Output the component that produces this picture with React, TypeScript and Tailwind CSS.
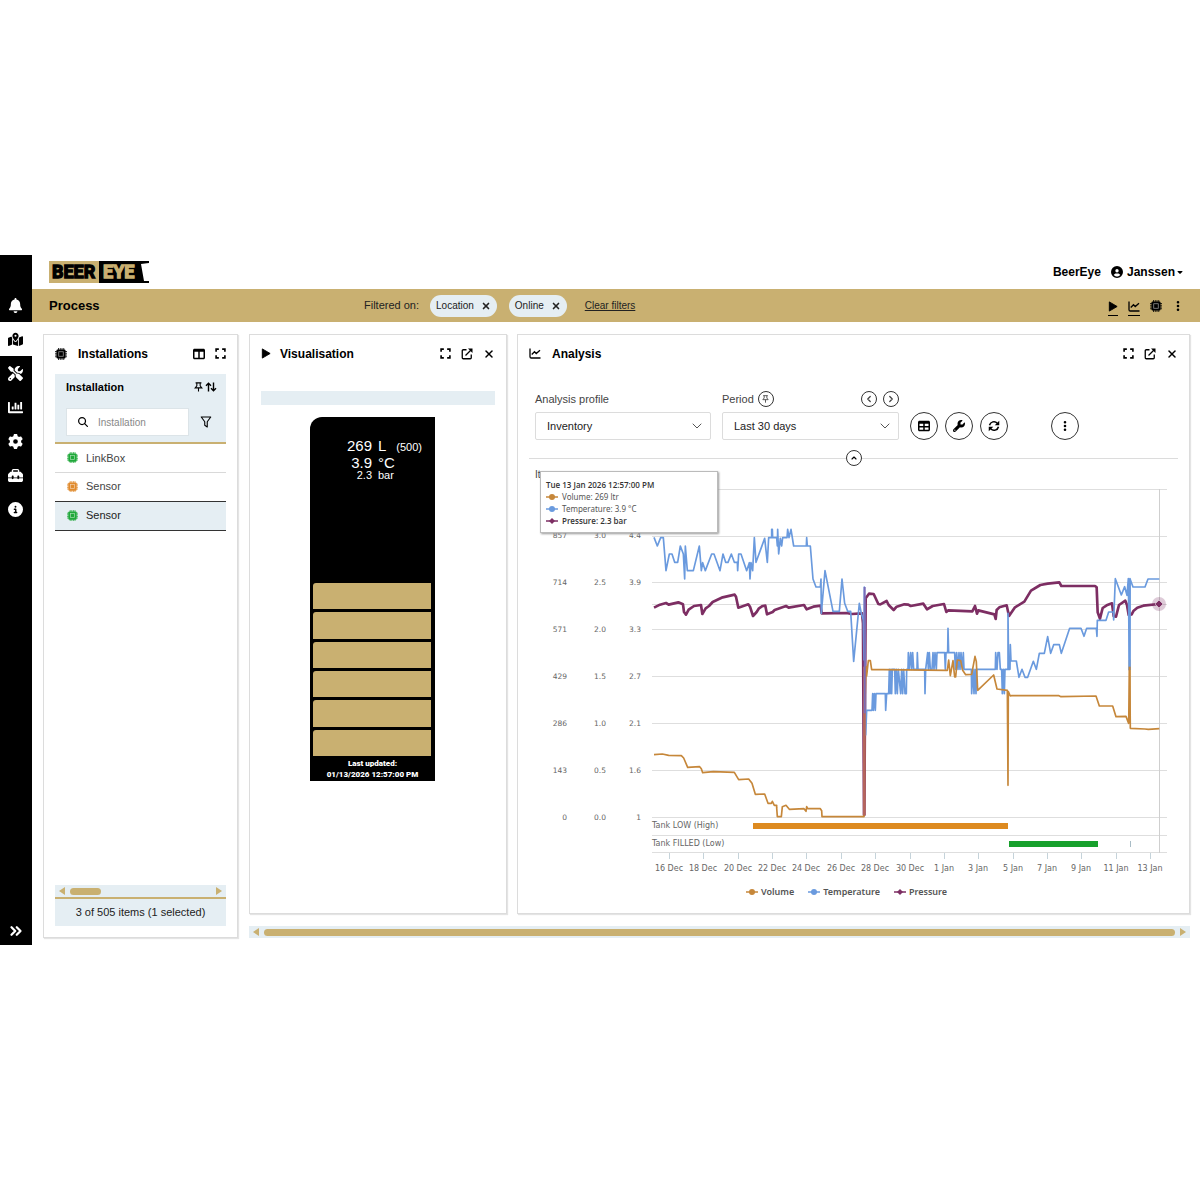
import React from "react";
import {
  FaBell,
  FaMapLocationDot,
  FaScrewdriverWrench,
  FaGear,
  FaToolbox,
  FaCircleInfo,
  FaTableColumns,
  FaCircleUser,
  FaCaretDown,
  FaTable,
  FaWrench,
  FaEllipsisVertical,
  FaMagnifyingGlass,
} from "react-icons/fa6";
import { FaChartBar } from "react-icons/fa";
import { ChevronDown, ChevronLeft, ChevronRight, ChevronUp, ChevronsRight, X } from "lucide-react";

type IconProps = { className?: string };

function LineChartIcon({ className }: IconProps) {
  return (
    <svg viewBox="0 0 24 22" className={className} fill="none" stroke="currentColor" strokeWidth="2.6" aria-hidden="true">
      <path d="M2 1v16.500q0 2.500 2.500 2.500H23" />
      <path d="M5.500 13l5.500-5.500 3.500 3.500 7.500-6.500" />
    </svg>
  );
}

function ChipIcon({ className }: IconProps) {
  return (
    <svg viewBox="0 0 24 24" className={className} fill="none" stroke="currentColor" aria-hidden="true">
      <path
        d="M7 0v24M10.500 0v24M14 0v24M17.500 0v24M0 7h24M0 10.500h24M0 14h24M0 17.500h24"
        strokeWidth="1.600"
      />
      <rect x="3" y="3" width="18" height="18" rx="2" fill="currentColor" stroke="none" />
      <rect x="7.500" y="7.500" width="9" height="9" stroke="#fff" strokeOpacity="0.600" strokeWidth="1.500" />
    </svg>
  );
}

function PinIcon({ className }: IconProps) {
  return (
    <svg viewBox="0 0 20 24" className={className} fill="none" stroke="currentColor" strokeWidth="2.600" aria-hidden="true">
      <path d="M3 2h14M6 2v7L2 14h16l-4-5V2M10 14v9" />
    </svg>
  );
}

function PlayIcon({ className }: IconProps) {
  return (
    <svg viewBox="0 0 10 12" className={className} fill="currentColor" stroke="currentColor" strokeWidth="1" strokeLinejoin="round" aria-hidden="true">
      <path d="M1 1l8.500 5L1 11z" />
    </svg>
  );
}

function FullscreenIcon({ className }: IconProps) {
  return (
    <svg viewBox="0 0 20 20" className={className} fill="none" stroke="currentColor" strokeWidth="3" aria-hidden="true">
      <path d="M2 7V2h5M13 2h5v5M18 13v5h-5M7 18H2v-5" />
    </svg>
  );
}

function PopOutIcon({ className }: IconProps) {
  return (
    <svg viewBox="0 0 24 24" className={className} fill="none" stroke="currentColor" strokeWidth="2.6" aria-hidden="true">
      <path d="M11 3.500H4.500a2 2 0 0 0-2 2V19.500a2 2 0 0 0 2 2H18.500a2 2 0 0 0 2-2V13" />
      <path d="M9 15L21 3" />
      <path d="M14 1h9v9z" fill="currentColor" stroke="none" />
    </svg>
  );
}

function SortIcon({ className }: IconProps) {
  return (
    <svg viewBox="0 0 24 20" className={className} fill="none" stroke="currentColor" strokeWidth="2.8" aria-hidden="true">
      <path d="M7 19V3M2 7.500L7 2.500l5 5" />
      <path d="M17 1v16M12 12.500l5 5 5-5" />
    </svg>
  );
}

function FunnelIcon({ className }: IconProps) {
  return (
    <svg viewBox="0 0 22 24" className={className} fill="none" stroke="currentColor" strokeWidth="2.200" strokeLinejoin="round" aria-hidden="true">
      <path d="M1.500 2h19l-7 9.500V22l-5-3.500v-7z" />
    </svg>
  );
}

function RefreshIcon({ className }: IconProps) {
  return (
    <svg viewBox="0 0 24 24" className={className} fill="none" stroke="currentColor" strokeWidth="3" aria-hidden="true">
      <path d="M3 10.500a9 9 0 0 1 15.500-4" />
      <path d="M22.500 1.500v9h-9z" fill="currentColor" stroke="none" />
      <path d="M21 13.500a9 9 0 0 1-15.500 4" />
      <path d="M1.500 22.500v-9h9z" fill="currentColor" stroke="none" />
    </svg>
  );
}

function Logo() {
  return (
    <a href="#home" aria-label="BeerEye" className="block">
      <svg viewBox="0 0 100 22" className="block h-[22px] w-[100px]" aria-hidden="true">
        <rect width="50" height="22" fill="#c9b071" />
        <path d="M50 0h50v2l-8 1 3 17h5v2H50z" fill="#000" />
        <g fontFamily="Roboto, sans-serif" fontWeight="700" fontSize="18" strokeWidth="1.300">
          <text x="3" y="17" fill="#000" stroke="#000">BEER</text>
          <text x="54" y="17" fill="#c9b071" stroke="#c9b071">EYE</text>
        </g>
      </svg>
    </a>
  );
}

const NAV = [
  { label: "Notifications", icon: FaBell, active: false },
  { label: "Process", icon: FaMapLocationDot, active: true },
  { label: "Maintenance", icon: FaScrewdriverWrench, active: false },
  { label: "Reports", icon: FaChartBar, active: false },
  { label: "Settings", icon: FaGear, active: false },
  { label: "Toolbox", icon: FaToolbox, active: false },
  { label: "Information", icon: FaCircleInfo, active: false },
];

function Sidebar() {
  return (
    <nav className="flex w-8 shrink-0 flex-col bg-black pt-[33px] text-white">
      {NAV.map(({ label, icon: Icon, active }) => (
        <button
          key={label}
          aria-label={label}
          className={
            active
              ? "flex h-[34px] items-center justify-center bg-white pr-0.5 text-black"
              : "flex h-[34px] items-center justify-center pr-0.5"
          }
        >
          <Icon className="size-[15px]" />
        </button>
      ))}
      <button aria-label="Expand menu" className="mt-auto flex h-7 items-center justify-center">
        <ChevronsRight className="size-[18px]" strokeWidth={3} />
      </button>
    </nav>
  );
}

function Chip({ label }: { label: string }) {
  return (
    <span className="flex h-[22px] items-center gap-[7px] rounded-full bg-[#e5eef3] px-1.5 text-[10px]">
      {label}
      <button aria-label={`Remove ${label}`}>
        <X className="size-2.5" strokeWidth={4} />
      </button>
    </span>
  );
}

function PanelHeader({
  title,
  icon,
  children,
}: {
  title: string;
  icon: React.ReactNode;
  children: React.ReactNode;
}) {
  return (
    <header className="mb-0.5 flex h-[37px] shrink-0 items-center">
      {icon}
      <h2 className="text-[12px] font-bold">{title}</h2>
      <div className="ml-auto flex items-center gap-2.5">{children}</div>
    </header>
  );
}

const PANEL = "flex flex-col border border-[#dcdcdc] bg-white px-[11px] shadow-[1px_1px_1px_#e4e4e4]";

function WindowButtons() {
  return (
    <>
      <button aria-label="Full screen">
        <FullscreenIcon className="size-[11px]" />
      </button>
      <button aria-label="Open in new window">
        <PopOutIcon className="size-3" />
      </button>
      <button aria-label="Close">
        <X className="size-3" strokeWidth={3} />
      </button>
    </>
  );
}

function ScrollArrow({ direction }: { direction: "left" | "right" }) {
  return (
    <button aria-label={`Scroll ${direction}`} className="text-[#c9b071]">
      <svg viewBox="0 0 6 8" className="block h-2 w-1.5" fill="currentColor" aria-hidden="true">
        <path d={direction === "left" ? "M6 0v8L0 4z" : "M0 0v8l6-4z"} />
      </svg>
    </button>
  );
}

const ITEMS = [
  { name: "LinkBox", tone: "text-[#1fa83a]", row: "h-[29px] border-b border-[#d9d9d9] text-[#444]" },
  { name: "Sensor", tone: "text-[#e08a2c]", row: "h-[29px] border-b border-[#333] text-[#444]" },
  { name: "Sensor", tone: "text-[#1fa83a]", row: "h-[29px] border-b border-[#333] bg-[#e5eef3] text-[#222]" },
];

function Installations() {
  return (
    <section className={`${PANEL} w-[195px] shrink-0 pb-[11px]`}>
      <PanelHeader title="Installations" icon={<ChipIcon className="mr-[11px] size-3" />}>
        <button aria-label="Columns">
          <FaTableColumns className="size-3" />
        </button>
        <button aria-label="Full screen">
          <FullscreenIcon className="size-[11px]" />
        </button>
      </PanelHeader>
      <table className="w-full border-collapse text-left text-[11px]">
        <thead>
          <tr className="border-b-2 border-[#c9b071] bg-[#e5eef3]">
            <th className="h-[69px] p-0 px-[11px] align-top">
              <div className="flex h-[26px] items-center">
                Installation
                <button aria-label="Pin column" className="mr-0.5 ml-auto">
                  <PinIcon className="h-2.5 w-[9px]" />
                </button>
                <button aria-label="Sort column" className="-mr-0.5">
                  <SortIcon className="h-2.5 w-3" />
                </button>
              </div>
              <div className="mt-2 flex items-center justify-between font-normal">
                <label className="flex h-7 w-[123px] items-center gap-2.5 border border-[#dce4e8] bg-white pl-[11px]">
                  <FaMagnifyingGlass className="size-2.5 shrink-0" />
                  <input
                    aria-label="Installation"
                    placeholder="Installation"
                    className="w-20 min-w-0 text-[10px] outline-none placeholder:text-[#888]"
                  />
                </label>
                <button aria-label="Filter" className="mr-[3px]">
                  <FunnelIcon className="h-3 w-3" />
                </button>
              </div>
            </th>
          </tr>
        </thead>
        <tbody>
          {ITEMS.map((item, i) => (
            <tr key={i} className={item.row}>
              <td className="px-3 py-0">
                <span className="flex items-center gap-2">
                  <ChipIcon className={`size-[11px] ${item.tone}`} />
                  {item.name}
                </span>
              </td>
            </tr>
          ))}
        </tbody>
      </table>
      <div className="mt-auto flex h-3 items-center gap-[5px] bg-[#e5eef3] px-1">
        <ScrollArrow direction="left" />
        <div className="h-[7px] flex-1">
          <div className="h-full w-[31px] rounded-full bg-[#c9b071]" />
        </div>
        <ScrollArrow direction="right" />
      </div>
      <footer className="flex h-[29px] items-center justify-center border-t-2 border-[#c9b071] bg-[#e5eef3] text-[11px] text-[#222]">
        3 of 505 items (1 selected)
      </footer>
    </section>
  );
}

function Visualisation() {
  return (
    <section className={`${PANEL} w-[258px] shrink-0`}>
      <PanelHeader title="Visualisation" icon={<PlayIcon className="mr-[9px] h-[11px] w-2.5" />}>
        <WindowButtons />
      </PanelHeader>
      <div className="mt-[17px] h-3.5 bg-[#e5eef3]" />
      <div className="mt-3 ml-[49px] flex w-[125px] flex-col rounded-tl-xl bg-black px-[3px] pt-[21px] text-white">
        <div className="grid grid-cols-[59px_1fr] gap-x-1.5">
          <span className="text-right text-[15px] leading-4">269</span>
          <span className="flex items-baseline gap-2.5 text-[15px] leading-4">
            L <span className="text-[11px] leading-4">(500)</span>
          </span>
          <span className="text-right text-[15px] leading-[15px]">3.9</span>
          <span className="text-[15px] leading-[15px]">°C</span>
          <span className="text-right text-[11px] leading-[11px]">2.3</span>
          <span className="text-[11px] leading-[11px]">bar</span>
        </div>
        <div className="mt-[102px] grid h-[173px] grid-rows-6 gap-[3px] pr-px">
          {[0, 1, 2, 3, 4, 5].map((level) => (
            <div key={level} className="rounded-tl-[3px] bg-[#c9b071]" />
          ))}
        </div>
        <p className="pt-0.5 pb-px text-center font-['Roboto'] text-[8px] leading-[11px] font-black">
          Last updated:
          <br />
          01/13/2026 12:57:00 PM
        </p>
      </div>
    </section>
  );
}

const LABEL_FONT = "'DejaVu Sans', sans-serif";

const GRID_ROWS = [
  { y: 536, volume: "857", pressure: "3.0", temperature: "4.4" },
  { y: 583, volume: "714", pressure: "2.5", temperature: "3.9" },
  { y: 630, volume: "571", pressure: "2.0", temperature: "3.3" },
  { y: 677, volume: "429", pressure: "1.5", temperature: "2.7" },
  { y: 724, volume: "286", pressure: "1.0", temperature: "2.1" },
  { y: 771, volume: "143", pressure: "0.5", temperature: "1.6" },
  { y: 818, volume: "0", pressure: "0.0", temperature: "1" },
];

const DATES = [
  "16 Dec", "18 Dec", "20 Dec", "22 Dec", "24 Dec", "26 Dec", "28 Dec", "30 Dec",
  "1 Jan", "3 Jan", "5 Jan", "7 Jan", "9 Jan", "11 Jan", "13 Jan",
];

// Series points are in thirds of a chart unit, measured from the plot origin (640, 480).
const PRESSURE =
  "42,383 60,374 78,369 86,374 115,367 129,373 132,396 138,404 146,389 162,378 183,375 187,402 197,385 207,378 218,366 248,352 284,344 288,350 295,383 325,373 330,380 339,408 350,396 357,385 368,378 376,377 381,403 398,396 404,390 438,378 446,383 492,375 500,388 520,380 542,377 545,400 620,399 635,402 666,400 669,430 672,1005 673,1005 677,355 687,341 701,342 715,372 721,373 740,363 746,375 761,390 770,380 793,373 805,374 812,378 850,371 861,388 878,378 912,372 919,396 925,391 997,394 1005,378 1011,401 1015,391 1063,403 1067,417 1070,390 1078,382 1100,376 1107,408 1125,382 1153,365 1173,332 1201,315 1223,311 1258,307 1264,318 1365,318 1370,322 1373,397 1380,416 1388,384 1400,376 1416,370 1421,408 1428,410 1437,375 1456,362 1461,375 1466,405 1475,403 1481,392 1492,383 1510,377 1557,372";

const TEMPERATURE =
  "42,172 52,198 62,173 70,173 78,272 88,222 96,222 104,247 113,247 121,198 130,222 134,297 136,198 142,272 160,272 178,198 184,272 188,248 196,272 215,222 222,222 240,272 249,222 257,247 264,247 274,222 283,247 292,247 293,272 296,222 303,222 320,272 328,248 330,297 333,248 338,272 343,173 348,247 374,175 382,247 386,173 395,173 395,148 397,148 398,173 410,173 412,198 413,148 416,222 421,175 425,198 428,173 441,173 443,148 447,173 453,148 461,198 499,198 500,173 502,198 511,198 519,297 528,321 541,321 543,297 544,400 555,272 579,394 598,394 606,297 614,370 623,394 632,394 641,544 658,370 664,400 670,420 672,540 673,321 677,765 680,691 696,691 698,641 700,691 703,641 706,691 708,641 736,641 737,691 740,641 746,641 748,568 750,641 753,568 755,641 757,568 764,568 766,641 769,568 772,641 775,568 782,641 785,568 788,641 791,568 795,641 799,641 800,568 804,568 805,518 808,568 812,518 815,568 818,518 821,568 831,568 832,518 834,568 854,568 855,641 857,568 863,518 865,568 868,518 871,568 876,568 879,518 882,568 885,518 889,568 891,518 914,518 916,568 918,518 923,518 924,445 926,518 944,518 946,568 950,518 954,568 957,518 960,568 963,518 967,568 970,518 972,568 994,568 995,641 999,568 1002,641 1005,568 1008,641 1010,568 1066,568 1067,518 1071,568 1074,518 1078,518 1081,568 1085,568 1087,641 1090,568 1093,641 1095,568 1104,568 1104,400 1106,568 1110,568 1111,494 1113,543 1129,543 1137,592 1146,568 1155,592 1163,592 1180,544 1189,568 1198,520 1213,520 1223,470 1232,520 1241,494 1258,494 1264,520 1289,445 1323,445 1332,469 1340,445 1369,445 1371,469 1372,421 1398,421 1406,396 1420,396 1421,420 1426,296 1444,345 1454,320 1461,346 1465,296 1468,570 1470,296 1479,321 1515,321 1524,297 1558,297";

const VOLUME =
  "42,824 67,822 86,826 124,827 131,834 143,862 179,860 184,866 188,878 220,875 283,877 296,899 326,897 336,910 346,943 374,942 384,970 394,970 397,964 403,976 410,976 410,983 412,1010 424,1010 427,980 438,976 448,988 492,986 498,994 500,980 503,986 541,986 545,992 546,1010 672,1010 674,700 678,560 680,588 685,542 691,542 695,569 730,569 922,571 926,540 931,587 939,542 944,591 947,591 952,540 962,542 968,571 977,584 995,583 1005,529 1009,545 1013,631 1061,585 1071,627 1102,631 1104,916 1105,635 1111,648 1115,647 1257,647 1263,650 1368,648 1378,678 1418,678 1428,710 1458,709 1466,730 1469,540 1471,745 1515,747 1525,748 1558,746";

const SERIES = [
  { name: "Volume", color: "#c6873a" },
  { name: "Temperature", color: "#6a9ade" },
  { name: "Pressure", color: "#7d2e63" },
];

function Marker({ color, diamond }: { color: string; diamond: boolean }) {
  return (
    <svg viewBox="0 0 12 8" className="block h-2 w-3 shrink-0" aria-hidden="true">
      <path d="M0 4h12" stroke={color} strokeWidth="1.500" />
      {diamond ? <path d="M6 1l3 3-3 3-3-3z" fill={color} /> : <circle cx="6" cy="4" r="3" fill={color} />}
    </svg>
  );
}

function Chart() {
  return (
    <svg viewBox="529 484 649 396" className="block w-full" role="img" aria-label="Volume, temperature and pressure over the last 30 days">
      <g stroke="#dedede" strokeWidth="1">
        {[490, 537, 583, 605, 630, 677, 724, 771, 818, 836, 853].map((y) => (
          <path key={y} d={`M652 ${y - 0.5}H1167`} />
        ))}
        <path d="M1159.500 489V853" stroke="#cfcfcf" strokeWidth="1" />
        {DATES.map((d, i) => (
          <path key={d} d={`M${Math.round(669 + i * 34.36) + 0.5} 853v6`} stroke="#c5d3da" />
        ))}
      </g>
      <g fontFamily={LABEL_FONT} fontSize="8" fill="#666">
        {GRID_ROWS.map((r) => (
          <g key={r.y} textAnchor="end" fontSize="7.500">
            <text x="567" y={r.y + 2}>{r.volume}</text>
            <text x="606" y={r.y + 2}>{r.pressure}</text>
            <text x="641" y={r.y + 2}>{r.temperature}</text>
          </g>
        ))}
        {DATES.map((d, i) => (
          <text key={d} x={Math.round(669 + i * 34.36)} y="871" textAnchor="middle">{d}</text>
        ))}
        <text x="652" y="828">Tank LOW (High)</text>
        <text x="652" y="846">Tank FILLED (Low)</text>
      </g>
      <rect x="753" y="823" width="255" height="6" fill="#dd8a20" />
      <rect x="1009" y="841" width="89" height="6" fill="#17a02c" />
      <rect x="1130" y="841" width="1" height="6" fill="#a9bcc6" />
      <g transform="translate(640 480) scale(0.33333)" fill="none" strokeLinejoin="round">
        <polyline points={PRESSURE} stroke="#7d2e63" strokeWidth="8" />
        <polyline points={TEMPERATURE} stroke="#6a9ade" strokeWidth="5" />
        <polyline points={VOLUME} stroke="#c6873a" strokeWidth="5" />
        <path d="M673 560V1005" stroke="#b5655c" strokeWidth="8" />
        <path d="M674 321V700" stroke="#7a6cb8" strokeWidth="6" />
        <path d="M1469 296V570" stroke="#6a9ade" strokeWidth="7" />
        <path d="M1469 560V725" stroke="#c6873a" strokeWidth="6" />
      </g>
      <circle cx="1159" cy="604" r="7" fill="#7d2e63" fillOpacity="0.250" />
      <path d="M1159 600l4 4-4 4-4-4z" fill="#7d2e63" stroke="#fff" strokeWidth="0.500" />
    </svg>
  );
}

function Tooltip() {
  const rows = ["Volume: 269 ltr", "Temperature: 3.9 °C", "Pressure: 2.3 bar"];
  return (
    <div className="absolute top-[5px] left-[11px] h-[62px] w-[178px] border border-[#bbb] bg-white px-[5px] pt-[7px] font-['Noto_Sans'] text-[8px] leading-3 text-[#333] shadow-[1px_1px_2px_#999]">
      <p className="font-['Open_Sans'] font-semibold">Tue 13 Jan 2026 12:57:00 PM</p>
      {rows.map((row, i) => (
        <p
          key={row}
          className={
            i === 2
              ? "flex items-center gap-1 font-['Open_Sans'] font-semibold"
              : "flex items-center gap-1 text-[#555]"
          }
        >
          <Marker color={SERIES[i].color} diamond={i === 2} />
          {row}
        </p>
      ))}
    </div>
  );
}

const SMALL_CIRCLE = "flex size-4 items-center justify-center rounded-full border border-[#333] bg-white";
const CIRCLE = "flex size-7 items-center justify-center rounded-full border border-[#333] bg-white";

function SelectBox({ id, value }: { id: string; value: string }) {
  return (
    <div className="relative mt-[5px]">
      <select id={id} defaultValue={value} className="h-7 w-full appearance-none rounded-xs border border-[#dcdcdc] bg-white px-[11px] text-[11px] text-[#222]">
        <option>{value}</option>
      </select>
      <ChevronDown className="pointer-events-none absolute top-1.5 right-1.5 size-4 text-[#333]" strokeWidth={1.25} />
    </div>
  );
}

function Analysis() {
  return (
    <section className={`${PANEL} min-w-0 flex-1 pb-2.5`}>
      <PanelHeader title="Analysis" icon={<LineChartIcon className="mr-[11px] h-[11px] w-3" />}>
        <WindowButtons />
      </PanelHeader>
      <div className="flex items-end px-1.5 pt-[17px]">
        <div className="w-44">
          <label htmlFor="profile" className="flex h-4 items-center text-[11px] text-[#444]">Analysis profile</label>
          <SelectBox id="profile" value="Inventory" />
        </div>
        <div className="ml-[11px] w-[177px]">
          <div className="flex h-4 items-center text-[11px] text-[#444]">
            <label htmlFor="period">Period</label>
            <button aria-label="Pin period" className={`${SMALL_CIRCLE} ml-1`}>
              <PinIcon className="h-2 w-[7px]" />
            </button>
            <button aria-label="Previous period" className={`${SMALL_CIRCLE} ml-auto`}>
              <ChevronLeft className="size-2.5" strokeWidth={3} />
            </button>
            <button aria-label="Next period" className={`${SMALL_CIRCLE} ml-1.5`}>
              <ChevronRight className="size-2.5" strokeWidth={3} />
            </button>
          </div>
          <SelectBox id="period" value="Last 30 days" />
        </div>
        <div className="ml-[11px] flex gap-[7px]">
          <button aria-label="Table view" className={CIRCLE}>
            <FaTable className="size-3" />
          </button>
          <button aria-label="Configure" className={CIRCLE}>
            <FaWrench className="size-3" />
          </button>
          <button aria-label="Refresh" className={CIRCLE}>
            <RefreshIcon className="size-3" />
          </button>
        </div>
        <button aria-label="More actions" className={`${CIRCLE} ml-[43px]`}>
          <FaEllipsisVertical className="size-3" />
        </button>
      </div>
      <div className="mt-[10px] flex items-center">
        <hr className="flex-1 border-[#dcdcdc]" />
        <button aria-label="Collapse filters" className={SMALL_CIRCLE}>
          <ChevronUp className="size-2" strokeWidth={3.5} />
        </button>
        <hr className="flex-1 border-[#dcdcdc]" />
      </div>
      <div className="relative">
        <p className="h-[18px] px-1.5 text-[10px] leading-[18px] text-[#444]">Items</p>
        <Chart />
        <ul className="ml-[217px] flex h-[23px] items-center gap-[14px] font-['Noto_Sans'] text-[9px] font-semibold text-[#555]">
          {SERIES.map((s, i) => (
            <li key={s.name} className="flex items-center gap-[3px]">
              <Marker color={s.color} diamond={i === 2} />
              {s.name}
            </li>
          ))}
        </ul>
        <Tooltip />
      </div>
    </section>
  );
}

export default function App() {
  return (
    <div className="flex min-h-screen w-full items-center bg-white font-['Liberation_Sans',sans-serif] text-black">
      <div className="flex w-full">
        <Sidebar />
        <div className="flex min-w-0 flex-1 flex-col">
          <header className="flex h-[34px] items-center pr-4 pl-[17px]">
            <Logo />
            <span className="ml-auto text-[12px] font-bold">BeerEye</span>
            <button className="ml-2.5 flex items-center text-[12px] font-bold">
              <FaCircleUser className="mr-1 size-3" />
              Janssen
              <FaCaretDown className="ml-px size-2" />
            </button>
          </header>
          <div className="flex h-[33px] items-center bg-[#c9b071] pr-4 pl-[17px]">
            <h1 className="w-[315px] text-[13px] font-bold">Process</h1>
            <div className="flex items-center text-[11px] text-[#222]">
              Filtered on:
              <div className="ml-[11px] flex gap-3">
                <Chip label="Location" />
                <Chip label="Online" />
              </div>
              <a href="#clear" className="ml-[18px] text-[10px] underline">Clear filters</a>
            </div>
            <div className="ml-auto flex items-center gap-2.5">
              <button aria-label="Visualisation" className="border-b border-black pt-[5px] pb-[3px]">
                <PlayIcon className="h-[11px] w-2.5" />
              </button>
              <button aria-label="Analysis" className="border-b border-black pt-[5px] pb-[3px]">
                <LineChartIcon className="h-[11px] w-3" />
              </button>
              <button aria-label="Devices">
                <ChipIcon className="size-3" />
              </button>
              <button aria-label="More">
                <FaEllipsisVertical className="size-3" />
              </button>
            </div>
          </div>
          <main className="flex gap-[11px] pt-3 pr-2.5 pb-[7px] pl-[11px]">
            <Installations />
            <div className="flex min-w-0 flex-1 flex-col">
              <div className="flex gap-2.5">
                <Visualisation />
                <Analysis />
              </div>
              <div className="mt-3 flex h-3 items-center gap-[5px] bg-[#e5eef3] px-1">
                <ScrollArrow direction="left" />
                <div className="h-[7px] flex-1 rounded-full bg-[#c9b071]" />
                <ScrollArrow direction="right" />
              </div>
            </div>
          </main>
        </div>
      </div>
    </div>
  );
}
